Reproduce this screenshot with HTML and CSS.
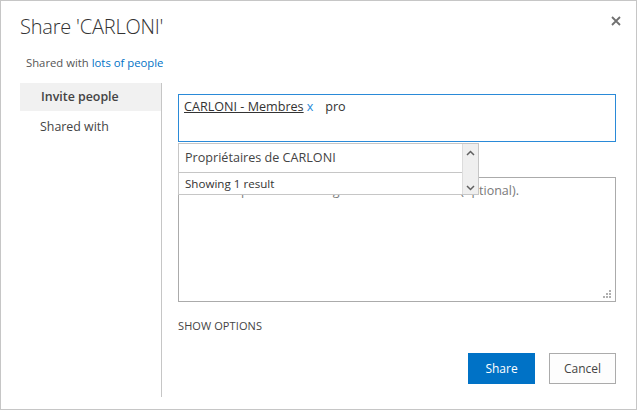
FILE: index.html
```html
<!DOCTYPE html>
<html lang="en">
<head>
<meta charset="utf-8">
<title>Share 'CARLONI'</title>
<link rel="stylesheet" href="styles.css">
</head>
<body>
<div class="dialog">
  <div class="header">
    <h1 class="title">Share 'CARLONI'</h1>
    <button class="close" aria-label="Close">
      <svg width="10" height="10" viewBox="0 0 10 10"><path d="M1 1L9 9M9 1L1 9" stroke="#707070" stroke-width="1.8" fill="none"/></svg>
    </button>
  </div>
  <div class="subtitle">Shared with <a href="#" class="link">lots of people</a></div>
  <div class="main">
    <nav class="nav">
      <div class="nav-item active">Invite people</div>
      <div class="nav-item">Shared with</div>
    </nav>
    <div class="content">
      <div class="picker">
        <div class="picker-input">
          <span class="token">CARLONI - Membres</span><span class="token-x">x</span><span class="typed">pro</span>
        </div>
        <div class="dropdown">
          <div class="dd-rows">
            <div class="dd-row dd-item">Propriétaires de CARLONI</div>
            <div class="dd-row dd-status">Showing 1 result</div>
          </div>
          <div class="dd-scroll">
            <svg width="9" height="6" viewBox="0 0 9 6"><path d="M1 5L4.5 1.5L8 5" stroke="#606060" stroke-width="1.5" fill="none"/></svg>
            <svg width="9" height="6" viewBox="0 0 9 6"><path d="M1 1L4.5 4.5L8 1" stroke="#606060" stroke-width="1.5" fill="none"/></svg>
          </div>
        </div>
      </div>
      <div class="message">
        <span class="placeholder">Include a personal message with this invitation (optional).</span>
        <svg class="grip" width="8" height="8" viewBox="0 0 8 8">
          <rect x="6" y="0" width="2" height="2" fill="#b0b0b0"/>
          <rect x="3" y="3" width="2" height="2" fill="#b0b0b0"/>
          <rect x="6" y="3" width="2" height="2" fill="#b0b0b0"/>
          <rect x="0" y="6" width="2" height="2" fill="#b0b0b0"/>
          <rect x="3" y="6" width="2" height="2" fill="#b0b0b0"/>
          <rect x="6" y="6" width="2" height="2" fill="#b0b0b0"/>
        </svg>
      </div>
      <div class="options">SHOW OPTIONS</div>
      <div class="buttons">
        <button class="btn primary">Share</button>
        <button class="btn">Cancel</button>
      </div>
    </div>
  </div>
</div>
</body>
</html>
```
FILE: styles.css
```css
* { box-sizing: border-box; }
html, body { margin: 0; padding: 0; background: #fff; }
body {
  font-family: "Open Sans", "Noto Sans", sans-serif;
  color: #444;
}
.dialog {
  width: 637px;
  height: 410px;
  border: 1px solid #c6c6c6;
  padding: 0 20px 0 19px;
  background: #fff;
}
.header {
  display: flex;
  justify-content: space-between;
  align-items: flex-start;
  padding-top: 12px;
}
.title {
  margin: 0;
  font-size: 20px;
  font-weight: 300;
  line-height: 28px;
  color: #333;
  letter-spacing: -0.2px;
}
.close {
  border: 0;
  background: none;
  padding: 0;
  margin: 3px -5px 0 0;
  width: 10px;
  height: 10px;
  display: flex;
}
.subtitle {
  margin-top: 13px;
  padding-left: 6px;
  font-size: 11.3px;
  line-height: 18px;
  color: #555;
}
.link { color: #0072c6; text-decoration: none; }
.main {
  display: flex;
  margin-top: 11px;
  height: 314px;
}
.nav {
  width: 142px;
  border-right: 1px solid #c6c6c6;
  flex: none;
}
.nav-item {
  height: 28px;
  line-height: 28px;
  padding-left: 20px;
  font-size: 12.4px;
  color: #444;
}
.nav-item.active {
  background: #f1f1f1;
  font-weight: 600;
  padding-left: 21px;
}
.nav-item + .nav-item { margin-top: 2px; }
.content {
  flex: 1;
  padding-left: 16px;
  padding-top: 11px;
}
.picker { position: relative; }
.picker-input {
  height: 48px;
  border: 1px solid #2a8ad8;
  padding: 3px 5px;
  font-size: 12.6px;
  line-height: 18px;
  color: #333;
}
.token { text-decoration: underline; color: #333; }
.token-x { color: #2a8ad8; margin-left: 3px; margin-right: 12px; }
.dropdown {
  position: absolute;
  top: 100%;
  left: 0;
  margin-top: 1px;
  width: 301px;
  height: 52px;
  border: 1px solid #c6c6c6;
  background: #fff;
  display: flex;
  z-index: 2;
}
.dd-rows { flex: 1; }
.dd-row { padding-left: 6px; }
.dd-item {
  height: 29px;
  line-height: 28px;
  font-size: 12.6px;
  border-bottom: 1px solid #c6c6c6;
  color: #444;
}
.dd-status {
  height: 21px;
  line-height: 21px;
  font-size: 11.6px;
  color: #333;
}
.dd-scroll {
  width: 16px;
  background: #efefef;
  border-left: 1px solid #dcdcdc;
  display: flex;
  flex-direction: column;
  justify-content: space-between;
  align-items: center;
  padding: 6px 0 3px;
}
.message {
  position: relative;
  margin-top: 35px;
  height: 125px;
  border: 1px solid #ababab;
  padding: 4px 6px;
  font-size: 12.5px;
  line-height: 18px;
}
.placeholder { color: #7a7a7a; }
.grip {
  position: absolute;
  right: 4px;
  bottom: 3px;
}
.options {
  margin-top: 16px;
  font-size: 11px;
  line-height: 16px;
  color: #444;
  letter-spacing: 0.1px;
}
.buttons {
  display: flex;
  justify-content: flex-end;
  gap: 14px;
  margin-top: 19px;
}
.btn {
  width: 67px;
  height: 31px;
  border: 1px solid #ababab;
  background: #fdfdfd;
  font-family: "Open Sans", "Noto Sans", sans-serif;
  font-size: 12px;
  color: #444;
  padding: 0;
}
.btn.primary {
  background: #0072c6;
  border-color: #0072c6;
  color: #fff;
}
```
